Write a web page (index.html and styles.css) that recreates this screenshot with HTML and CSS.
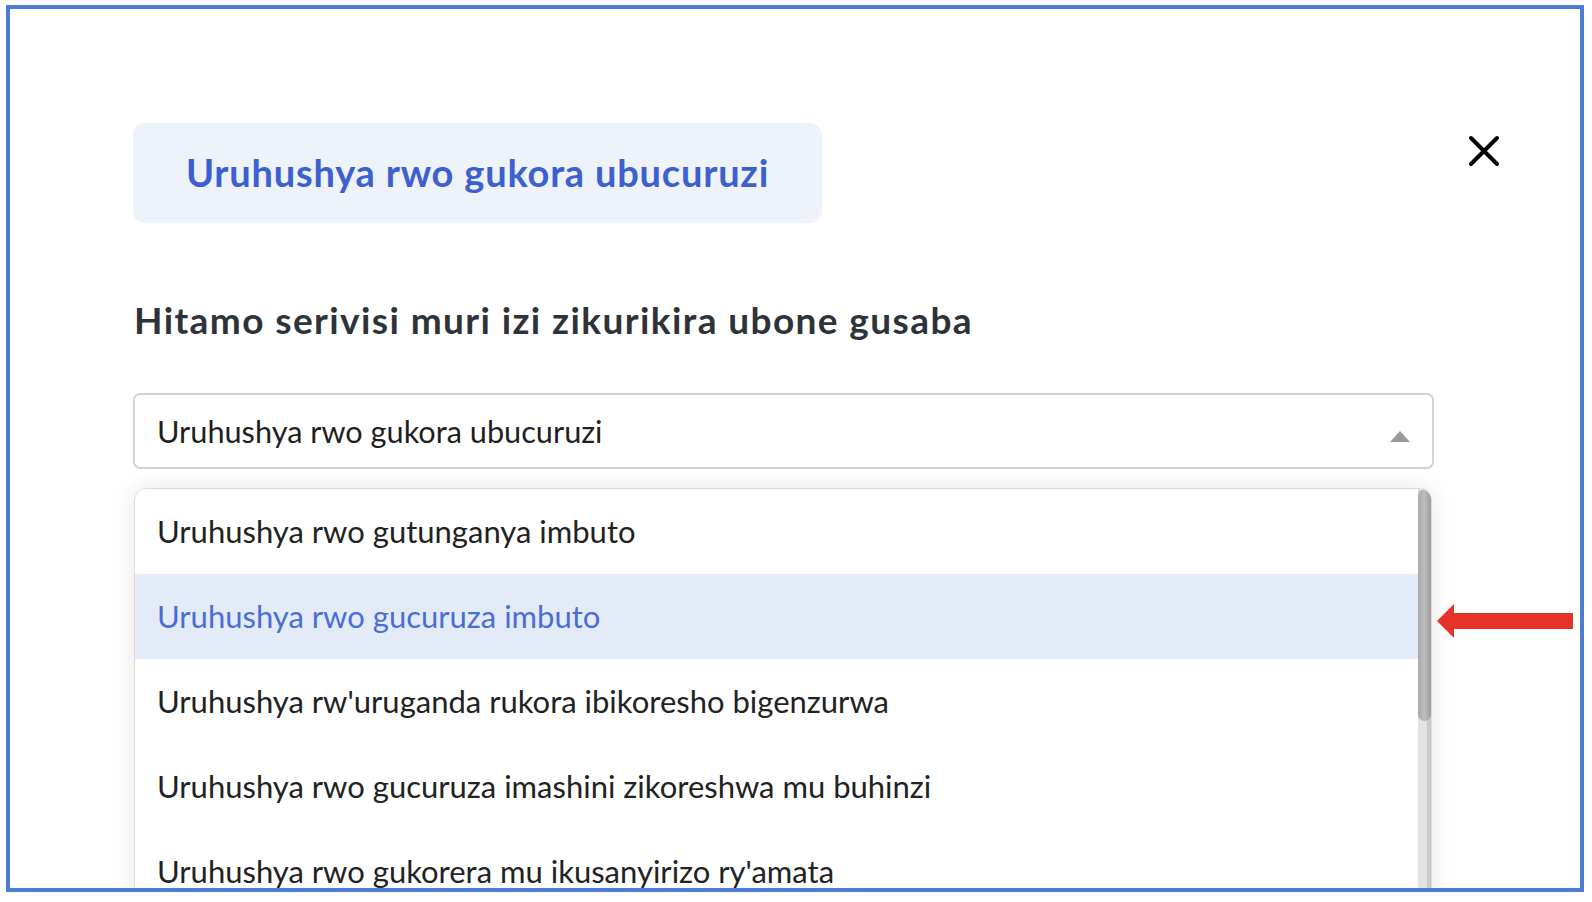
FILE: index.html
```html
<!DOCTYPE html>
<html lang="rw">
<head>
<meta charset="utf-8">
<title>Uruhushya rwo gukora ubucuruzi</title>
<link rel="stylesheet" href="styles.css">
</head>
<body>
<div class="frame">
  <div class="header">
    <div class="badge">Uruhushya rwo gukora ubucuruzi</div>
    <button class="close" aria-label="Funga">
      <svg width="32" height="32" viewBox="0 0 32 32"><path d="M3 3 L29 29 M29 3 L3 29" stroke="#000" stroke-width="4" stroke-linecap="round" fill="none"/></svg>
    </button>
  </div>
  <div class="content">
    <h2 class="question">Hitamo serivisi muri izi zikurikira ubone gusaba</h2>
    <div class="select">
      <span class="select-value">Uruhushya rwo gukora ubucuruzi</span>
      <span class="caret"></span>
    </div>
    <div class="listbox">
      <ul class="options">
        <li class="option">Uruhushya rwo gutunganya imbuto</li>
        <li class="option active">Uruhushya rwo gucuruza imbuto</li>
        <li class="option">Uruhushya rw'uruganda rukora ibikoresho bigenzurwa</li>
        <li class="option">Uruhushya rwo gucuruza imashini zikoreshwa mu buhinzi</li>
        <li class="option">Uruhushya rwo gukorera mu ikusanyirizo ry'amata</li>
      </ul>
      <div class="scrollbar"><div class="thumb"></div></div>
    </div>
  </div>
  <svg class="pointer" width="137" height="34" viewBox="0 0 137 34">
    <polygon points="0,17 17,0 17,9 136,9 136,25 17,25 17,34" fill="#e5332a"/>
  </svg>
</div>
</body>
</html>
```
FILE: styles.css
```css
* { box-sizing: border-box; }
html, body { margin: 0; padding: 0; background: #fff; }
body { font-family: "Lato", "Open Sans", sans-serif; }

.frame {
  position: relative;
  margin: 5px 0 0 6px;
  width: 1578px;
  height: 887px;
  border: 4px solid #4e7bd5;
  overflow: hidden;
  padding-left: 123px;
}

.header {
  display: flex;
  justify-content: space-between;
  align-items: flex-start;
  margin-top: 114px;
  padding-right: 80px;
}

.badge {
  width: 689px;
  height: 100px;
  background: #eef2fb;
  border-radius: 12px;
  color: #3c60d0;
  font-weight: 700;
  font-size: 38px;
  letter-spacing: 0.8px;
  display: flex;
  align-items: center;
  justify-content: center;
  padding-bottom: 2px;
}

.close {
  border: 0;
  background: none;
  padding: 0;
  margin-top: 12px;
  width: 32px;
  height: 32px;
  cursor: pointer;
}
.close svg { display: block; }

.content { width: 1301px; }

.question {
  margin: 75px 0 0 1px;
  font-size: 37px;
  letter-spacing: 1.4px;
  font-weight: 700;
  color: #2e3339;
  line-height: 44px;
}

.select {
  margin-top: 51px;
  height: 76px;
  border: 2px solid #d3d3d3;
  border-radius: 7px;
  display: flex;
  align-items: center;
  justify-content: space-between;
  padding: 0 22px 0 22px;
  font-size: 30.7px;
  color: #1f1f1f;
}

.caret {
  width: 0;
  height: 0;
  border-left: 10.5px solid transparent;
  border-right: 10.5px solid transparent;
  border-bottom: 11px solid #9a9a9a;
  margin-top: 10px;
}

.listbox {
  margin-top: 19px;
  margin-left: 1px;
  width: 1298px;
  height: 420px;
  display: flex;
  border: 1px solid #dcdcdc;
  border-radius: 12px 12px 0 0;
  box-shadow: 0 0 24px rgba(0,0,0,0.10);
  overflow: hidden;
  background: #fff;
}

.options {
  list-style: none;
  margin: 0;
  padding: 0;
  flex: 1;
}

.option {
  height: 85px;
  line-height: 85px;
  padding-left: 22px;
  font-size: 31px;
  color: #222;
}
.option.active {
  background: #e4ebf8;
  color: #4a6ed6;
}

.scrollbar {
  width: 13px;
  background: linear-gradient(to right, #e2e2e2 0, #e2e2e2 9px, #c9c9c9 9px, #c9c9c9 13px);
}
.thumb {
  height: 232px;
  border-radius: 7px;
  background: linear-gradient(to right, #a9a9a9, #bdbdbd 50%, #9c9c9c);
}

.pointer {
  position: absolute;
  left: 1427px;
  top: 595px;
}
```
